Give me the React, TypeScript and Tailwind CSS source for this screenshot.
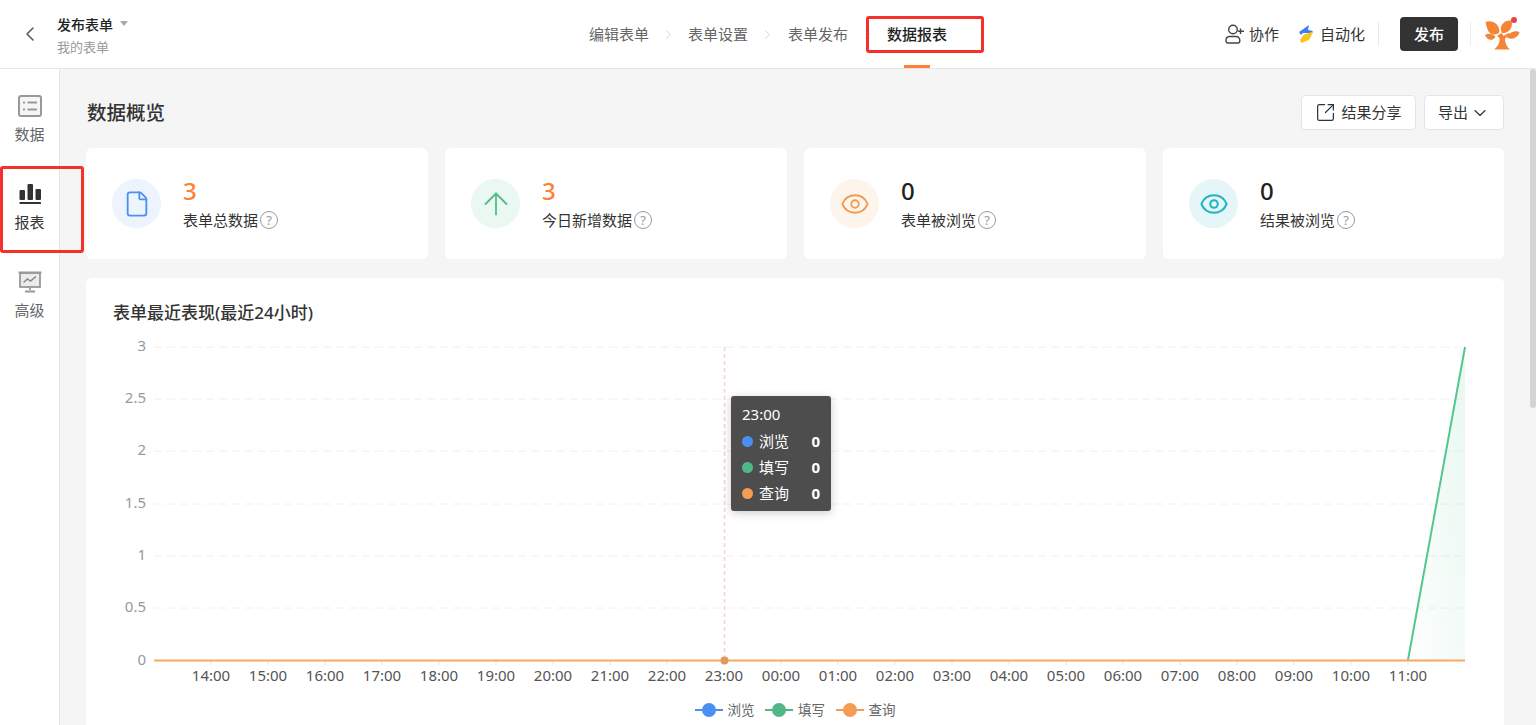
import React from "react";
import { ChevronDown, ChevronLeft, ChevronRight, Eye, ArrowUp, File, SquareArrowOutUpRight } from "lucide-react";

const font = "font-['Noto_Sans','Noto_Sans_CJK_SC',sans-serif]";

const hours = ["14:00","15:00","16:00","17:00","18:00","19:00","20:00","21:00","22:00","23:00","00:00","01:00","02:00","03:00","04:00","05:00","06:00","07:00","08:00","09:00","10:00","11:00"];
const yAxis = [
  { label: "3", y: 347 },
  { label: "2.5", y: 399 },
  { label: "2", y: 451 },
  { label: "1.5", y: 504 },
  { label: "1", y: 556 },
  { label: "0.5", y: 608 },
];

const Help = () => (
  <span className="ml-[2px] inline-flex h-[18px] w-[18px] items-center justify-center rounded-full border-[1.5px] border-[#999] text-[13px] leading-none text-[#999]">?</span>
);

const stats = [
  { value: "3", label: "表单总数据", valueCls: "text-[#ff8034]", circle: "bg-[#edf4fe]", icon: <File size={28} strokeWidth={1.6} className="text-[#4f8ff0]" /> },
  { value: "3", label: "今日新增数据", valueCls: "text-[#ff8034]", circle: "bg-[#ebf7f1]", icon: <ArrowUp size={36} strokeWidth={1.2} className="text-[#4fbb87]" /> },
  { value: "0", label: "表单被浏览", valueCls: "text-[#222]", circle: "bg-[#fdf4ec]", icon: <Eye size={30} strokeWidth={1.5} className="text-[#f39a50]" /> },
  { value: "0", label: "结果被浏览", valueCls: "text-[#222]", circle: "bg-[#e6f6f8]", icon: <Eye size={30} strokeWidth={1.7} className="text-[#22b3c4]" /> },
];

const legend = [
  { label: "浏览", color: "bg-[#4b8ff3]" },
  { label: "填写", color: "bg-[#52b788]" },
  { label: "查询", color: "bg-[#f59c52]" },
];

const Logo = () => (
  <svg width="36" height="34" viewBox="0 0 36 34">
    <g fill="#f58534">
      <path d="M1.500 5C8 2.500 15 6.500 15.500 14 15.500 17.500 10 18.500 6.500 16.500 3.500 14.500 2.500 9 1.500 5z" />
      <path d="M1 18C4 16 9 16.500 11.500 20 8 24.500 3 23.500 1 18z" />
      <path d="M18 16C14.500 9.500 19.500 2.500 27.500 3.500 29.500 9 25.500 17 18 16z" />
      <path d="M23 20.500C25 15 31 13 35.500 15 34.500 20.500 28 23.500 23 20.500z" />
      <path d="M13 19 15.500 21C16 25 14.500 29 10 32.500L26 32.500C22 29 21 25 21 21.500L26 17.500 24.500 16 19.500 19 18 16 16 17z" />
    </g>
    <circle cx="30" cy="3" r="3" fill="#ee3f4d" />
  </svg>
);

const Bolt = () => (
  <svg width="16" height="18" viewBox="0 0 16 18">
    <path d="M1 7 11 0 10 5 15 6 13 8 5 8 3 10z" fill="#3f80ee" />
    <path d="M2 15 6 9.500 15.500 6.500 11 15 3.500 18z" fill="#fbc41d" />
  </svg>
);

const PersonPlus = () => (
  <svg width="19" height="20" viewBox="0 0 19 20" fill="none" stroke="#444" strokeWidth="1.400">
    <circle cx="8" cy="5.500" r="4.300" />
    <path d="M4.500 12.500h6.500a3.800 3.800 0 0 1 3.800 3.800v.7a2 2 0 0 1-2 2H3a2 2 0 0 1-2-2v-.7a3.800 3.800 0 0 1 3.500-3.800z" />
    <path d="M15.500 4.500v5.500M13 7.200h6" />
  </svg>
);

const TableIcon = () => (
  <svg width="24" height="22" viewBox="0 0 24 22" fill="none" stroke="#999" strokeWidth="2">
    <rect x="1" y="1" width="22" height="20" rx="2" fill="#f6f6f6" />
    <path d="M5 7.500h2M5 14.500h2M9.500 7.500h9.500M9.500 14.500h9.500" />
  </svg>
);

const BarsIcon = () => (
  <svg width="22" height="22" viewBox="0 0 22 22" fill="#333">
    <rect x="0.500" y="7" width="5.500" height="10" rx="1" />
    <rect x="8.500" y="1" width="5.500" height="16" rx="1" />
    <rect x="16.500" y="6" width="5.500" height="11" rx="1" />
    <rect x="0.500" y="19" width="21.500" height="2" rx="0.500" />
  </svg>
);

const ScreenIcon = () => (
  <svg width="24" height="22" viewBox="0 0 24 22" fill="none">
    <rect x="2" y="2" width="20" height="14" fill="#ececec" stroke="#999" strokeWidth="1.800" />
    <path d="M0.500 1.500h23M12 16v3M7 20.500h10" stroke="#999" strokeWidth="1.800" />
    <path d="M5.500 11.500 9.500 8l3 2 5.500-4.500" stroke="#888" strokeWidth="1.500" />
  </svg>
);

const SideItem = ({ icon, label, active }: { icon: React.ReactNode; label: string; active?: boolean }) => (
  <div className="flex h-[88px] flex-col items-center pt-[26px]">
    <div className="flex h-[22px] items-center justify-center">{icon}</div>
    <div className={`mt-[7px] text-[15px] leading-[20px] ${active ? "text-[#333]" : "text-[#666]"}`}>{label}</div>
  </div>
);

const NavSep = ({ wide }: { wide?: boolean }) => (
  <ChevronRight size={15} strokeWidth={1.300} className={`ml-[12px] text-[#c8c8c8] ${wide ? "mr-[13px]" : "mr-[12px]"}`} />
);

const App = () => {
  return (
    <div className={`relative flex h-[725px] w-[1536px] flex-col overflow-hidden bg-white ${font}`}>
      <header className="flex h-[69px] shrink-0 items-center border-b border-[#e5e5e5] bg-white">
        <div className="flex w-[589px] shrink-0 items-center">
          <ChevronLeft size={24} strokeWidth={1.500} className="ml-[18px] text-[#555]" />
          <div className="ml-[15px] pt-[2px]">
            <div className="flex items-center text-[14px] leading-[20px] font-medium text-[#222]">
              发布表单
              <span className="mb-[3px] ml-[7px] h-0 w-0 border-x-[4px] border-t-[5px] border-x-transparent border-t-[#aaa]" />
            </div>
            <div className="mt-[3px] text-[13px] leading-[18px] text-[#999]">我的表单</div>
          </div>
        </div>
        <nav className="flex flex-1 items-center text-[15px] leading-[20px] text-[#666]">
          <span>编辑表单</span>
          <NavSep />
          <span>表单设置</span>
          <NavSep wide />
          <span>表单发布</span>
          <NavSep />
          <span className="relative font-medium text-[#222]">
            数据报表
            <span className="absolute top-[-8px] left-[-21px] h-[37px] w-[118px] rounded-[3px] border-[3px] border-[#f5302b]" />
            <span className="absolute top-[41px] left-[17px] h-[3px] w-[26px] bg-[#ff8034]" />
          </span>
        </nav>
        <div className="flex items-center text-[15px] text-[#333]">
          <PersonPlus />
          <span className="ml-[5px]">协作</span>
          <span className="ml-[19px] flex"><Bolt /></span>
          <span className="ml-[6px]">自动化</span>
          <span className="ml-[13px] h-[24px] w-px bg-[#e8e8e8]" />
          <button className="ml-[21px] h-[34px] w-[58px] rounded-[4px] bg-[#333] text-[15px] font-medium text-white">发布</button>
          <span className="ml-[12px] h-[24px] w-px bg-[#eee]" />
          <span className="mr-[16px] ml-[13px] flex"><Logo /></span>
        </div>
      </header>

      <div className="flex min-h-0 flex-1">
        <aside className="relative w-[60px] shrink-0 border-r border-[#e5e5e5] bg-white">
          <SideItem icon={<TableIcon />} label="数据" />
          <SideItem icon={<BarsIcon />} label="报表" active />
          <SideItem icon={<ScreenIcon />} label="高级" />
        </aside>

        <main className="min-w-0 flex-1 bg-[#f5f5f5] pr-[32px] pl-[26px]">
          <div className="flex h-[79px] items-center justify-between pt-[8px]">
            <h1 className="pl-px text-[19.500px] font-medium text-[#333]">数据概览</h1>
            <div className="flex gap-[8px] text-[15px] text-[#333]">
              <button className="flex h-[35px] w-[115px] items-center justify-center rounded-[4px] border border-[#e5e5e5] bg-white">
                <SquareArrowOutUpRight size={21} strokeWidth={1.400} className="mr-[5px]" />
                结果分享
              </button>
              <button className="flex h-[35px] w-[80px] items-center justify-center rounded-[4px] border border-[#e5e5e5] bg-white">
                导出
                <ChevronDown size={20} strokeWidth={1.400} className="ml-[2px]" />
              </button>
            </div>
          </div>

          <div className="grid grid-cols-[342px_342px_342px_341px] gap-[17px]">
            {stats.map((s) => (
              <div key={s.label} className="flex h-[111px] items-center rounded-[6px] bg-white pl-[26px]">
                <div className={`flex h-[49px] w-[49px] items-center justify-center rounded-full ${s.circle}`}>{s.icon}</div>
                <div className="ml-[22px]">
                  <div className={`text-[24px] leading-[28px] font-medium ${s.valueCls}`}>{s.value}</div>
                  <div className="mt-[5px] flex items-center text-[15px] leading-[20px] text-[#333]">
                    {s.label}
                    <Help />
                  </div>
                </div>
              </div>
            ))}
          </div>

          <section className="relative mt-[19px] h-[500px] rounded-[6px] bg-white">
            <h2 className="pt-[25px] pl-[27px] text-[17px] leading-[20px] font-medium text-[#333]">表单最近表现(最近24小时)</h2>
            <svg width="1418" height="360" viewBox="86 330 1418 360" className="mt-[7px] block">
              <defs>
                <linearGradient id="fillGreen" x1="1" y1="0" x2="0" y2="1">
                  <stop offset="0" stopColor="#52c78e" stopOpacity="0.130" />
                  <stop offset="1" stopColor="#52c78e" stopOpacity="0.010" />
                </linearGradient>
              </defs>
              {yAxis.map((t) => (
                <line key={t.label} x1="154" x2="1465" y1={t.y} y2={t.y} stroke="#f0f0f0" strokeDasharray="8 5" />
              ))}
              {yAxis.map((t) => (
                <text key={t.label} x="146" y={t.y + 4} textAnchor="end" fontSize="15" fill="#999">{t.label}</text>
              ))}
              <text x="146" y="665" textAnchor="end" fontSize="15" fill="#999">0</text>
              <line x1="724.500" x2="724.500" y1="347" y2="660" stroke="#f3cfe9" strokeWidth="1.500" strokeDasharray="4 3" />
              <polygon points="1408,660 1465,347 1465,660" fill="url(#fillGreen)" />
              {hours.map((h, i) => (
                <g key={h}>
                  <line x1={211 + i * 57} x2={211 + i * 57} y1="660" y2="665" stroke="#e5e5e5" />
                  <text x={211 + i * 57} y="681" textAnchor="middle" fontSize="15" fill="#555">{h}</text>
                </g>
              ))}
              <line x1="1408" y1="660" x2="1465" y2="347" stroke="#52c78e" strokeWidth="2" />
              <line x1="154" x2="1465" y1="660.500" y2="660.500" stroke="#f9a862" strokeWidth="2" />
              <circle cx="724.500" cy="660.500" r="4" fill="#e09a5d" />
            </svg>

            <div className="mt-[11px] flex items-center justify-center gap-[10.5px] text-[13.500px] leading-[18px] text-[#666]">
              {legend.map((l) => (
                <div key={l.label} className="flex items-center">
                  <span className="relative flex h-[14px] w-[28px] items-center justify-center">
                    <span className={`h-[2px] w-[28px] ${l.color}`} />
                    <span className={`absolute h-[14px] w-[14px] rounded-full ${l.color}`} />
                  </span>
                  <span className="ml-[5px]">{l.label}</span>
                </div>
              ))}
            </div>

            <div className="absolute top-[118px] left-[645px] h-[115px] w-[100px] rounded-[3px] bg-[#4d4d4d] px-[11px] pt-[8px] text-white shadow-[0_2px_10px_rgba(0,0,0,0.2)]">
              <div className="text-[15px] leading-[20px]">23:00</div>
              {legend.map((l, i) => (
                <div key={l.label} className={`flex h-[20px] items-center text-[15px] leading-[20px] ${i === 0 ? "mt-[7px]" : "mt-[6px]"}`}>
                  <span className={`h-[11px] w-[11px] rounded-full ${l.color}`} />
                  <span className="ml-[6px] flex-1">{l.label}</span>
                  <span className="font-bold">0</span>
                </div>
              ))}
            </div>
          </section>
        </main>
      </div>

      {/* annotation box over the sidebar */}
      <div className="absolute top-[166px] left-0 h-[87px] w-[84px] rounded-[3px] border-[3px] border-[#f5302b]" />
      {/* scrollbar thumb */}
      <div className="absolute top-[69px] right-0 h-[339px] w-[6px] rounded-[3px] bg-[#d4d4d4]" />
    </div>
  );
};

export default App;
